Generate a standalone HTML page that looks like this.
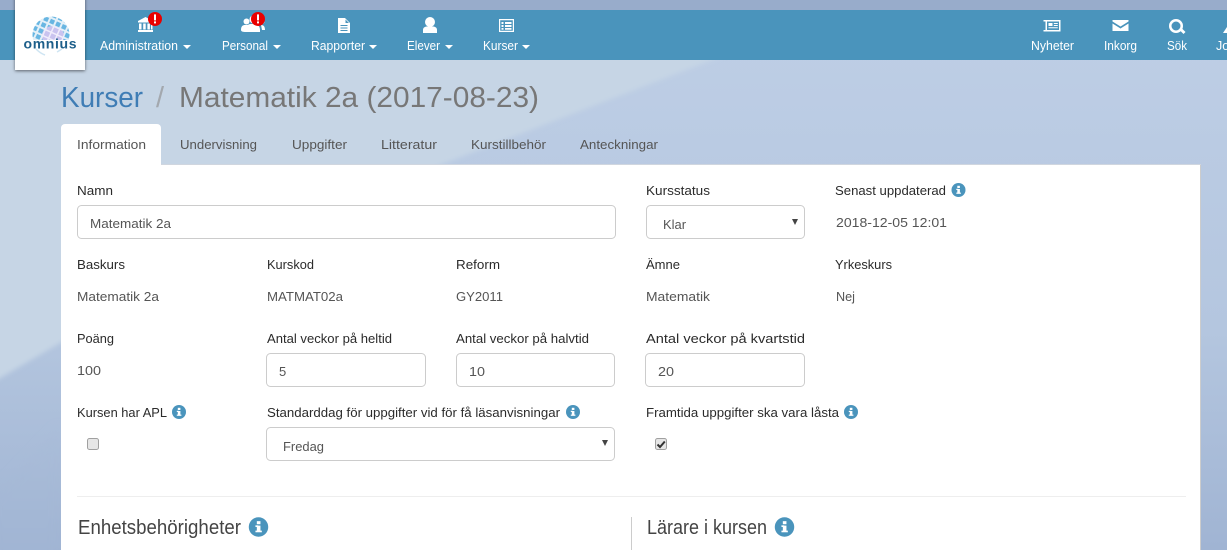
<!DOCTYPE html>
<html><head><meta charset="utf-8"><style>
html,body{margin:0;padding:0;width:1227px;height:550px;overflow:hidden;background:#bccde4}
svg{position:absolute;left:0;top:0;display:block}
text{font-family:"Liberation Sans",sans-serif;font-size:13px;fill:#333}
.n{fill:#fff;font-size:12.5px}
.t{fill:#555;font-size:13px}
.v{fill:#555;font-size:13px}
.l{fill:#2b2b2b;font-size:13px}
.h{fill:#444;font-size:20px}
</style></head><body>
<svg width="1227" height="550" viewBox="0 0 1227 550" xmlns="http://www.w3.org/2000/svg">
<defs>
<linearGradient id="bg" x1="0" y1="0" x2="0" y2="1"><stop offset="0" stop-color="#bfcfe6"/><stop offset=".6" stop-color="#b4c6df"/><stop offset="1" stop-color="#a0b4d3"/></linearGradient>
<linearGradient id="dk" x1="0" y1="0" x2="0" y2="1"><stop offset="0" stop-color="#aabdd9"/><stop offset="1" stop-color="#a0b4d3"/></linearGradient>
<filter id="b1" x="-10%" y="-10%" width="120%" height="120%"><feGaussianBlur stdDeviation="2.500"/></filter>
<filter id="b2" x="-30%" y="-30%" width="160%" height="160%"><feGaussianBlur stdDeviation="5"/></filter>
<filter id="sh" x="-20%" y="-20%" width="140%" height="140%"><feDropShadow dx="0" dy="1" stdDeviation="1.500" flood-color="#000" flood-opacity=".55"/></filter>
<pattern id="tile" width="6.500" height="6.500" patternUnits="userSpaceOnUse" patternTransform="rotate(24 50 32)"><rect width="4.500" height="4.500" fill="#68b6e2"/></pattern>
<pattern id="tile2" width="6.500" height="6.500" patternUnits="userSpaceOnUse" patternTransform="rotate(24 50 32)"><rect width="5" height="5" fill="#c9c3ef"/></pattern>
<clipPath id="gl"><path d="M30 40V12H72V40Z"/></clipPath>
<g id="i"><circle r="7" fill="#4a94bc"/><rect x="-1.200" y="-1" width="2.600" height="4.600" fill="#fff"/><rect x="-2.200" y="-1.200" width="2" height="1.200" fill="#fff"/><rect x="-2.200" y="2.600" width="4.600" height="1.200" fill="#fff"/><rect x="-1.200" y="-4.200" width="2.600" height="2.200" fill="#fff"/></g>
<g id="c"><path d="M0 0h8l-4 4z" fill="#fff"/></g>
<g id="s"><path d="M0 0h6l-3 6z" fill="#444"/></g>
<g id="ex"><circle r="7" fill="#e80000"/><rect x="-1" y="-4.600" width="2" height="6" fill="#fff"/><rect x="-1" y="2.400" width="2" height="2" fill="#fff"/></g>
</defs>
<rect width="1227" height="550" fill="url(#bg)"/>
<rect width="1227" height="10" fill="#98accb"/>
<path d="M-10 55H725L440 165 60 343 -10 384Z" fill="#c6d5e5" filter="url(#b1)"/>
<path d="M-10 500L60 427V560H-10Z" fill="url(#dk)" filter="url(#b2)"/>
<rect y="10" width="1227" height="50" fill="#4a94bc"/>

<!-- logo -->
<rect x="15" y="-4" width="70" height="74" fill="#fff" filter="url(#sh)"/>
<g clip-path="url(#gl)">
<circle cx="51" cy="35" r="18.500" fill="#e4f0f8"/>
<circle cx="51" cy="35" r="18.500" fill="url(#tile)"/>
<ellipse cx="53" cy="36" rx="11" ry="10" fill="#f0edfb"/>
<ellipse cx="53" cy="36" rx="11" ry="10" fill="url(#tile2)"/>
</g>
<path d="M36 49c3 3 6 5 9 6M62 49c-2 1-3 2-5 3" fill="none" stroke="#cfe5f3" stroke-width="1.500"/>
<text x="23.500" y="48.500" style="fill:#1d5f8a;font-size:14px;font-weight:bold" textLength="53" lengthAdjust="spacing">omnius</text>

<!-- nav icons -->
<g fill="#fff">
<path d="M145.500 17l7.500 4v1.500h-15V21zM139 23.500h2.500v6H139zM143.200 23.500h2.500v6h-2.500zM147.400 23.500h2.500v6h-2.500zM151 23.500h1.500v6H151zM138 30h15v2h-15z"/>
<circle cx="246.500" cy="21.500" r="3"/><circle cx="253.500" cy="19.500" r="4"/><circle cx="262" cy="21.500" r="2.500"/>
<path d="M241 30c0-4 2-5 4-5h3c1-1 2-1 5-1s7 1 7 6v2h-13c-3 0-6 0-6-2zM261 25c3 0 4 2 4 5h-3z"/>
<path fill-rule="evenodd" d="M338 18h7l5 5v10h-12zM345.500 19.500v3.500h3.500zM340.500 25v1h7v-1zM340.500 27.500v1h7v-1zM340.500 30v1h7v-1z"/>
<circle cx="430" cy="22" r="5"/><path d="M423 33v-3c0-2.500 2-3.500 4-3.500h6c2 0 4 1 4 3.500v3z"/>
<path fill-rule="evenodd" d="M499 19h15v13h-15zM500.200 20.200v10.600h12.600V20.200zM501.500 22h2v2h-2zM505 22h6.500v2H505zM501.500 25h2v2h-2zM505 25h6.500v2H505zM501.500 28h2v1.800h-2zM505 28h6.500v1.800H505z"/>
<path fill-rule="evenodd" d="M1043.500 20h17v11.500h-17zM1047 21.500v8.500h12v-8.500zM1048.500 23h4v3h-4zM1053.800 23h4v1h-4zM1053.800 25h4v1h-4zM1048.500 27.200h9.300v1h-9.300zM1043.500 21.500h2v8.500h-2z"/>
<path d="M1112.500 20h16v1.500l-8 5-8-5zM1112.500 23.500l8 5 8-5V31h-16z"/>
<path fill-rule="evenodd" d="M1176 19a7 7 0 1 1 0 14 7 7 0 0 1 0-14zM1176 21.500a4.500 4.500 0 1 0 0 9 4.500 4.500 0 0 0 0-9z"/><path d="M1180 30.500l2-2 3.500 3.500-2 2z"/>
<path d="M1223 33l4-6v6z"/>
</g>
<use href="#ex" x="155" y="19"/><use href="#ex" x="258" y="19"/>

<text class="n" x="100" y="50" textLength="78" lengthAdjust="spacingAndGlyphs">Administration</text><use href="#c" x="183" y="45"/>
<text class="n" x="222" y="50" textLength="46" lengthAdjust="spacingAndGlyphs">Personal</text><use href="#c" x="273" y="45"/>
<text class="n" x="311" y="50" textLength="54" lengthAdjust="spacingAndGlyphs">Rapporter</text><use href="#c" x="369" y="45"/>
<text class="n" x="407" y="50" textLength="33" lengthAdjust="spacingAndGlyphs">Elever</text><use href="#c" x="445" y="45"/>
<text class="n" x="483" y="50" textLength="35" lengthAdjust="spacingAndGlyphs">Kurser</text><use href="#c" x="522" y="45"/>
<text class="n" x="1031" y="50" textLength="43" lengthAdjust="spacingAndGlyphs">Nyheter</text>
<text class="n" x="1104" y="50" textLength="33" lengthAdjust="spacingAndGlyphs">Inkorg</text>
<text class="n" x="1167" y="50" textLength="20" lengthAdjust="spacingAndGlyphs">Sök</text>
<text class="n" x="1216" y="50">Jo</text>

<!-- title -->
<text x="61" y="107" style="font-size:29px;fill:#3f7db5" textLength="82" lengthAdjust="spacingAndGlyphs">Kurser</text>
<text x="156" y="107" style="font-size:29px;fill:#a3a8ae">/</text>
<text x="179" y="107" style="font-size:29px;fill:#777" textLength="360" lengthAdjust="spacingAndGlyphs">Matematik 2a (2017-08-23)</text>

<!-- panel -->
<rect x="61" y="165" width="1140" height="390" fill="#fff"/>
<rect x="1200" y="165" width="1" height="385" fill="#ccc"/>
<rect x="61" y="164" width="1140" height="1" fill="#d0d6df"/>
<path d="M61 166v-38a4 4 0 0 1 4-4h92a4 4 0 0 1 4 4v38z" fill="#fff"/>

<text class="t" x="77" y="149" textLength="69" lengthAdjust="spacingAndGlyphs">Information</text>
<text class="t" x="180" y="149" textLength="77" lengthAdjust="spacingAndGlyphs">Undervisning</text>
<text class="t" x="292" y="149" textLength="55" lengthAdjust="spacingAndGlyphs">Uppgifter</text>
<text class="t" x="381" y="149" textLength="56" lengthAdjust="spacingAndGlyphs">Litteratur</text>
<text class="t" x="471" y="149" textLength="75" lengthAdjust="spacingAndGlyphs">Kurstillbehör</text>
<text class="t" x="580" y="149" textLength="78" lengthAdjust="spacingAndGlyphs">Anteckningar</text>

<!-- row 1 -->
<text class="l" x="77" y="195" textLength="36" lengthAdjust="spacingAndGlyphs">Namn</text>
<text class="l" x="646" y="195" textLength="64" lengthAdjust="spacingAndGlyphs">Kursstatus</text>
<text class="l" x="835" y="195" textLength="111" lengthAdjust="spacingAndGlyphs">Senast uppdaterad</text>
<use href="#i" x="958.500" y="190"/>
<rect x="77.500" y="205.500" width="538" height="33" rx="4" fill="#fff" stroke="#ccc"/>
<text class="v" x="90" y="228" textLength="81" lengthAdjust="spacingAndGlyphs">Matematik 2a</text>
<rect x="646.500" y="205.500" width="158" height="33" rx="4" fill="#fff" stroke="#ccc"/>
<text class="v" x="663" y="229" textLength="23" lengthAdjust="spacingAndGlyphs">Klar</text>
<use href="#s" x="792" y="219"/>
<text class="v" x="836" y="227" textLength="111" lengthAdjust="spacingAndGlyphs">2018-12-05 12:01</text>

<!-- row 2 -->
<text class="l" x="77" y="269" textLength="48" lengthAdjust="spacingAndGlyphs">Baskurs</text>
<text class="l" x="267" y="269" textLength="47" lengthAdjust="spacingAndGlyphs">Kurskod</text>
<text class="l" x="456" y="269" textLength="44" lengthAdjust="spacingAndGlyphs">Reform</text>
<text class="l" x="646" y="269" textLength="34" lengthAdjust="spacingAndGlyphs">Ämne</text>
<text class="l" x="835" y="269" textLength="57" lengthAdjust="spacingAndGlyphs">Yrkeskurs</text>
<text class="v" x="77" y="301" textLength="82" lengthAdjust="spacingAndGlyphs">Matematik 2a</text>
<text class="v" x="267" y="301" textLength="76" lengthAdjust="spacingAndGlyphs">MATMAT02a</text>
<text class="v" x="456" y="301" textLength="47" lengthAdjust="spacingAndGlyphs">GY2011</text>
<text class="v" x="646" y="301" textLength="64" lengthAdjust="spacingAndGlyphs">Matematik</text>
<text class="v" x="836" y="301" textLength="19" lengthAdjust="spacingAndGlyphs">Nej</text>

<!-- row 3 -->
<text class="l" x="77" y="343" textLength="37" lengthAdjust="spacingAndGlyphs">Poäng</text>
<text class="l" x="267" y="343" textLength="125" lengthAdjust="spacingAndGlyphs">Antal veckor på heltid</text>
<text class="l" x="456" y="343" textLength="133" lengthAdjust="spacingAndGlyphs">Antal veckor på halvtid</text>
<text class="l" x="646" y="343" textLength="159" lengthAdjust="spacingAndGlyphs">Antal veckor på kvartstid</text>
<text class="v" x="77" y="375" textLength="24" lengthAdjust="spacingAndGlyphs">100</text>
<rect x="266.500" y="353.500" width="159" height="33" rx="4" fill="#fff" stroke="#ccc"/>
<rect x="456.500" y="353.500" width="158" height="33" rx="4" fill="#fff" stroke="#ccc"/>
<rect x="645.500" y="353.500" width="159" height="33" rx="4" fill="#fff" stroke="#ccc"/>
<text class="v" x="279" y="376">5</text>
<text class="v" x="469" y="376" textLength="16" lengthAdjust="spacingAndGlyphs">10</text>
<text class="v" x="658" y="376" textLength="16" lengthAdjust="spacingAndGlyphs">20</text>

<!-- row 4 -->
<text class="l" x="77" y="417" textLength="90" lengthAdjust="spacingAndGlyphs">Kursen har APL</text>
<use href="#i" x="179" y="412"/>
<text class="l" x="267" y="417" textLength="293" lengthAdjust="spacingAndGlyphs">Standarddag för uppgifter vid för få läsanvisningar</text>
<use href="#i" x="573" y="412"/>
<text class="l" x="646" y="417" textLength="193" lengthAdjust="spacingAndGlyphs">Framtida uppgifter ska vara låsta</text>
<use href="#i" x="851" y="412"/>
<rect x="87.500" y="438.500" width="11" height="11" rx="2" fill="#e6e6e6" stroke="#a0a0a0"/>
<rect x="266.500" y="427.500" width="348" height="33" rx="4" fill="#fff" stroke="#ccc"/>
<text class="v" x="283" y="451" textLength="41" lengthAdjust="spacingAndGlyphs">Fredag</text>
<use href="#s" x="602" y="440"/>
<rect x="655.500" y="438.500" width="11" height="11" rx="2" fill="#e6e6e6" stroke="#a0a0a0"/>
<path d="M657.500 444.500l2.500 2.500 4.800-5.500" fill="none" stroke="#333" stroke-width="2"/>

<rect x="77" y="496" width="1109" height="1" fill="#eee"/>
<rect x="631" y="517" width="1" height="33" fill="#ccc"/>
<text class="h" x="78" y="534" textLength="163" lengthAdjust="spacingAndGlyphs">Enhetsbehörigheter</text>
<g transform="translate(258.500 527) scale(1.390)"><use href="#i"/></g>
<text class="h" x="647" y="534" textLength="120" lengthAdjust="spacingAndGlyphs">Lärare i kursen</text>
<g transform="translate(784.500 527) scale(1.390)"><use href="#i"/></g>
</svg>
</body></html>
